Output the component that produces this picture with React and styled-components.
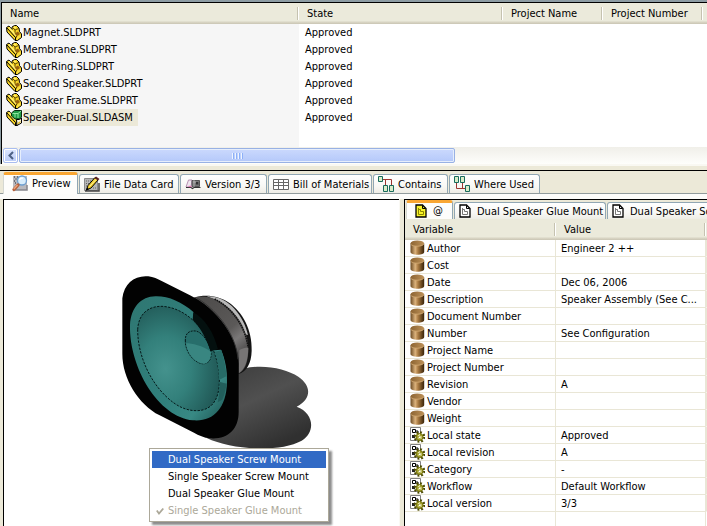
import React, { useState } from 'react';
import styled, { createGlobalStyle, css } from 'styled-components';

const GlobalStyle = createGlobalStyle`
  * { box-sizing: border-box; }
  body {
    margin: 0;
    overflow: hidden;
    background: #ece9d8;
    color: #000;
    font: 11px/13px "DejaVu Sans Condensed", "DejaVu Sans", sans-serif;
  }
  button { font: inherit; color: inherit; }
`;

const Page = styled.div`
  display: flex;
  flex-direction: column;
  height: 100vh;
`;

/* ---------- file list ---------- */

const FilePane = styled.section`
  flex: none;
  padding: 2px 0 0 1px;
  background: #8d9ca3;
`;

const FileList = styled.div`
  border: solid #000;
  border-width: 1px 0 0 1px;
  background: linear-gradient(to right, #f6f6f6 297px, #fff 297px);
`;

const ListBody = styled.div`
  height: 144px;
`;

const Table = styled.table`
  width: 100%;
  table-layout: fixed;
  border-collapse: separate;
  border-spacing: 0;
`;

const Th = styled.th`
  width: ${(p) => (p.$width ? `${p.$width}px` : 'auto')};
  height: 21px;
  padding: 0 8px;
  text-align: left;
  font-weight: normal;
  white-space: nowrap;
  background:
    ${(p) => (p.$width ? 'linear-gradient(to right, #c5c2b0 1px, #fff 1px) right center / 2px 13px no-repeat,' : '')}
    linear-gradient(#ebeadb 84%, #d8d4c3 92%, #c9c5b3);
`;

const FileCell = styled.td`
  height: 17px;
  padding: 0 0 0 ${(p) => (p.$first ? 4 : 6)}px;
  white-space: nowrap;
`;

const IconLabel = styled.div`
  display: flex;
  align-items: center;
  gap: ${(p) => p.$gap || 1}px;
  height: 16px;

  svg { flex: none; }
`;

const FileName = styled.span`
  height: 17px;
  line-height: 17px;
  padding-right: 5px;
  background: ${(p) => (p.$selected ? '#ece9d8' : 'transparent')};
`;

const ScrollBar = styled.div`
  display: flex;
  gap: 1px;
  height: 17px;
  padding: 1px 0 1px 1px;
  background: linear-gradient(#f0efe9, #fefefb);
`;

const ScrollArrow = styled.button`
  display: flex;
  align-items: center;
  justify-content: center;
  width: 15px;
  padding: 0;
  border: 1px solid #a9bdf0;
  border-radius: 2px;
  background: linear-gradient(#dce6fe, #b9cbf8);
  box-shadow: inset 0 0 0 1px #fff;
`;

const ScrollThumb = styled.div`
  display: flex;
  align-items: center;
  justify-content: center;
  gap: 1px;
  width: 62%;
  border: 1px solid #98b1e4;
  border-radius: 2px;
  background: linear-gradient(#cbd9fd, #b9ccfb 80%, #b0c5f6);
  box-shadow: inset 0 0 0 1px #e6eefc;
`;

const Grip = styled.i`
  width: 1px;
  height: 6px;
  background: #eef4fe;
  border-right: 1px solid #8cb0f8;
  box-sizing: content-box;
`;

const Splitter = styled.div`
  flex: none;
  height: 6px;
  background: #ece9d8;
  border-top: 2px solid #f9f8f2;
`;

/* ---------- tabs ---------- */

const Lower = styled.section`
  flex: 1;
  min-height: 0;
  display: flex;
  flex-direction: column;
  border-top: 1px solid #000;
`;

const TabStrip = styled.div`
  flex: none;
  display: flex;
  align-items: flex-end;
  gap: 1px;
  height: 23px;
  padding-left: 3px;
  border-bottom: 1px solid #919b9c;
  background: #ece9d8;
`;

const InnerTabStrip = styled(TabStrip)`
  height: 19px;
  padding-left: 1px;
  border-bottom: 0;
  overflow: hidden;
`;

const Tab = styled.button`
  flex: none;
  display: flex;
  align-items: center;
  gap: ${(p) => (p.$inner ? 6 : 4)}px;
  width: ${(p) => p.$width}px;
  height: ${(p) => (p.$inner ? 17 : 19)}px;
  padding: 0 0 0 4px;
  border: 1px solid #91a7b4;
  border-bottom: 0;
  border-radius: 3px 3px 0 0;
  background: linear-gradient(#fff, #f8f8f5 60%, #eeede5);
  white-space: nowrap;

  svg { flex: none; }

  ${(p) =>
    p.$active &&
    css`
      height: ${p.$inner ? 19 : 22}px;
      margin-bottom: ${p.$inner ? 0 : -1}px;
      padding: 0 0 ${p.$inner ? 1 : 3}px 8px;
      border-top: 3px solid #f9a632;
      border-left-color: #d5d8d2;
      background: #fdfdfb;
    `}
`;

const Panes = styled.div`
  flex: 1;
  min-height: 0;
  display: grid;
  grid-template-columns: 4fr 3fr;
  padding-top: 5px;
  background: #fcfcfa;
`;

const PreviewFrame = styled.div`
  min-width: 0;
  padding: 0 5px 0 3px;
  background: #ece9d8;
`;

const Preview = styled.div`
  position: relative;
  height: 100%;
  padding: 65px 0 0 106px;
  border: solid #000;
  border-width: 1px 0 0 1px;
  background: #fff;
  box-shadow: 1px 0 0 #faf9f4;
`;

const Details = styled.div`
  min-width: 0;
  overflow: hidden;
  border: solid #000;
  border-width: 1px 0 0 1px;
  background: #fff;
`;

const VarCell = styled.td`
  height: 17px;
  padding: 0 0 0 5px;
  overflow: hidden;
  white-space: nowrap;
  border-bottom: 1px solid ${(p) => (p.$empty ? 'transparent' : '#e9e6d6')};
  border-right: 1px solid #e9e6d6;
`;

const DetailBody = styled.div`
  height: 100%;
  background:
    linear-gradient(#e9e6d6, #e9e6d6) 150px 0 / 1px 100% no-repeat,
    linear-gradient(#e9e6d6, #e9e6d6) 300px 0 / 1px 100% no-repeat,
    #fff;
`;

/* ---------- configuration menu ---------- */

const Menu = styled.div`
  position: absolute;
  left: 145px;
  top: 248px;
  width: 180px;
  padding: 2px;
  border: 1px solid #aca899;
  background: #fff;
  box-shadow: 3px 3px 2px rgba(0, 0, 0, 0.45);
`;

const MenuItem = styled.button`
  display: flex;
  align-items: center;
  width: 100%;
  height: 17px;
  padding: 0;
  border: 0;
  background: ${(p) => (p.$active ? '#316ac5' : 'transparent')};
  color: ${(p) => (p.$active ? '#fff' : '#000')};
  white-space: nowrap;

  &:disabled { color: #aca899; }
`;

const CheckSlot = styled.span`
  display: flex;
  justify-content: center;
  width: 16px;
`;

/* ---------- icons ---------- */

const PartIcon = () => (
  <svg width="16" height="16" viewBox="0 0 16 16">
    <path d="M.5 2.500 3 1l3 3.500V2L8.500.500h2L13 3l.5 3.500 2 2.500v3.500l-4 3H9L1 7z" fill="#f8d424" stroke="#000" />
    <path d="M1 3 9.500 12.500V15M9.500 12.500l1.500-1" fill="none" stroke="#000" />
    <path d="M7 3l2 2 3.500-1.500M9 5v3" fill="none" stroke="#3a2b00" strokeWidth=".8" />
    <path d="M3 2.500 10 10.500M8 2l2 1.300" fill="none" stroke="#fff27a" strokeWidth="1.300" />
    <path d="m8.500 8.500 3.500-2L14 9l-3 2.200z" fill="#96620f" />
    <path d="M11 12.500 14.500 10v2L11 14.500z" fill="#fbe04a" />
  </svg>
);

const AssemblyIcon = () => (
  <svg width="16" height="16" viewBox="0 0 16 16">
    <path d="M.5 2.500 3 1l4 5 4 3v6.500H9L1 7z" fill="#f8d424" stroke="#000" />
    <path d="M1 3 9.500 12.500V15" fill="none" stroke="#000" />
    <path d="M3 2.500 9.500 10" stroke="#fff27a" strokeWidth="1.300" />
    <path d="M5.500 3 8.500.500h7V7l-2 2H9L5.500 6z" fill="#1f9a45" stroke="#062c10" />
    <path d="M6.500 3.500H12V8M12 3.500l3-2.500M9 3.500v4" fill="none" stroke="#8ee7a0" />
    <path d="M10.500 9.500h3l2-1.500v5l-4.500 2.500z" fill="#f7f3df" stroke="#000" />
    <path d="M11.500 13 14.500 11v1.500l-3 2z" fill="#e8bf20" />
  </svg>
);

const DatabaseIcon = () => (
  <svg width="15" height="16" viewBox="0 0 15 16">
    <defs>
      <linearGradient id="cyl">
        <stop offset="0" stopColor="#6b4a22" />
        <stop offset=".35" stopColor="#dbb27c" />
        <stop offset=".55" stopColor="#aa7b42" />
        <stop offset="1" stopColor="#382208" />
      </linearGradient>
      <linearGradient id="cylTop">
        <stop offset="0" stopColor="#8c6432" />
        <stop offset="1" stopColor="#bd9158" />
      </linearGradient>
    </defs>
    <path d="M.500 3.500v8.500c0 1.700 3 2.700 7 2.700s6.700-1 6.700-2.700V3.500z" fill="url(#cyl)" />
    <ellipse cx="7.300" cy="3.400" rx="6.800" ry="2.900" fill="url(#cylTop)" />
    <path d="M.8 4.300c1.500 2.400 11 2.600 13 0" fill="none" stroke="#dcb47c" strokeWidth=".7" />
  </svg>
);

const GearIcon = () => (
  <svg width="15" height="16" viewBox="0 0 15 16">
    <path d="M.5.500h10v13H.500z" fill="#fff" stroke="#808080" />
    <path d="M2.500 2.500h3v3h-3zM5.500 4H8v3" fill="none" stroke="#000" />
    <path d="M2 8h3v3H2z" fill="#222" />
    <circle cx="9.500" cy="10" r="4.600" fill="none" stroke="#4b4a00" strokeWidth="2.600" strokeDasharray="1.800 1.812" />
    <circle cx="9.500" cy="10" r="3.500" fill="#a2a02e" stroke="#77750a" />
    <path d="M8 8.500h1.500V7M11 9v3M8 11h1.500" stroke="#e2e1a0" fill="none" />
    <path d="M9 9.500h1.500V11H9z" fill="#fff" />
  </svg>
);

const PreviewIcon = () => (
  <svg width="16" height="17" viewBox="0 0 16 17">
    <path d="M1 1h14v14H1z" fill="#b9b9bd" />
    <path d="M2 2h1M5 2h1M3.500 4h1M2 6h1M3 8h1" stroke="#55555f" strokeWidth="1.400" />
    <path d="M3 15h12V10" fill="none" stroke="#85858c" strokeWidth="1.500" />
    <circle cx="10" cy="5.500" r="4.500" fill="#d8edfb" stroke="#6fa0d0" strokeWidth="1.300" />
    <path d="M7.500 5c.5-1.500 2-2.200 3.500-1.700" stroke="#fff" strokeWidth="1.300" fill="none" />
    <path d="M6 10 2 14.500" stroke="#b5603c" strokeWidth="3.200" strokeLinecap="round" />
    <path d="M5.500 10 1.800 14" stroke="#f0a67c" strokeWidth="1.300" />
  </svg>
);

const CardIcon = () => (
  <svg width="16" height="16" viewBox="0 0 16 16">
    <path d="M.5 2.500h13v12H.500z" fill="#b6b6b6" stroke="#8a8a8a" />
    <path d="M2 5h5M2 7.500h3M2 10h2M9 12h4" stroke="#666" strokeDasharray="1 1" />
    <path d="M1 15h14V7" fill="none" stroke="#444" strokeWidth="1.500" />
    <path d="m4 9.500 7-8L14 4 7 12l-4.500 2z" fill="#f2cf2d" stroke="#000" />
    <path d="M5.500 10.500 12.500 3" stroke="#fff3a1" />
    <path d="M10.500 2 14 4.500 15.500 3 12 .500z" fill="#5b2020" />
    <path d="m2 14.500 1-3 2 1.500z" fill="#000" />
  </svg>
);

const VersionIcon = () => (
  <svg width="16" height="12" viewBox="0 0 16 12">
    <path d="M3.500 2 1 9h5l1-7z" fill="#efe6ee" stroke="#a87ba4" strokeWidth=".8" />
    <path d="M7 2.500h7.500v6H7z" fill="#777" stroke="#555" />
    <path d="M9 2v7M8 4h3M12 5h2" stroke="#bbb" strokeWidth=".8" />
    <path d="M1 9.500h5l1.500 1 1.500-1h6.500" fill="none" stroke="#333" strokeWidth="1.200" />
    <path d="M3.500 8.500h3" stroke="#e178b4" strokeWidth="1.300" />
    <path d="M11 4h2.500v2.500H11z" fill="#333" />
  </svg>
);

const GridIcon = () => (
  <svg width="16" height="11" viewBox="0 0 16 11">
    <path d="M.5.500h15v10H.500zM.5 3.500h15M.5 6.500h15M5.500.500v10M10.500.500v10" fill="#fff" stroke="#666" />
  </svg>
);

const ContainsIcon = () => (
  <svg width="16" height="16" viewBox="0 0 16 16">
    <path d="M4 3.500h9.500V10M7.500 3.500V10" fill="none" stroke="#9c3530" />
    <path d="M.5.500h4v5h-4zM5.500 9.500h4v6h-4zM11.500 9.500h4v6h-4z" fill="#d9ecc8" stroke="#176b5c" />
  </svg>
);

const WhereUsedIcon = () => (
  <svg width="16" height="16" viewBox="0 0 16 16">
    <path d="M2.500 5v7.500H12M8.500 5v7.500" fill="none" stroke="#9c3530" />
    <path d="M.5.500h4v6h-4zM6.500.500h4v6h-4zM11.500 9.500h4v6h-4z" fill="#d9ecc8" stroke="#176b5c" />
  </svg>
);

const DocIcon = ({ fill = '#fff' }) => (
  <svg width="12" height="14" viewBox="0 0 12 14">
    <path d="M1 1h6.500L11 4.500V13H1z" fill={fill} stroke="#000" strokeWidth="1.300" />
    <path d="M3.500 10.500V4M3.500 10.500h5v-3h-3v-2h-2" fill="none" stroke={fill === '#fff' ? '#777' : '#8b8700'} />
    <path d="M7.500 1.500v3h3" fill="none" stroke="#000" />
  </svg>
);

const LeftArrow = () => (
  <svg width="6" height="9" viewBox="0 0 6 9">
    <path d="M5 1 1.500 4.500 5 8" fill="none" stroke="#4d6185" strokeWidth="2" />
  </svg>
);

const Check = () => (
  <svg width="8" height="8" viewBox="0 0 8 8">
    <path d="m.8 3.500 2.200 3L7.300 1.500" fill="none" stroke="#aca899" strokeWidth="1.800" />
  </svg>
);

const Speaker = () => (
  <svg width="220" height="186" viewBox="0 0 660 558">
    <defs>
      <linearGradient id="shadow" x1="0" y1="0" x2=".6" y2="1">
        <stop offset="0" stopColor="#3a3a3a" />
        <stop offset=".5" stopColor="#505050" />
        <stop offset="1" stopColor="#303030" />
      </linearGradient>
      <linearGradient id="can" x1="0" y1="0" x2=".6" y2="1">
        <stop offset="0" stopColor="#4c4a49" />
        <stop offset=".6" stopColor="#5b5958" />
        <stop offset=".75" stopColor="#7a7878" />
        <stop offset="1" stopColor="#3e3d3d" />
      </linearGradient>
      <linearGradient id="rim" x1="0" y1="0" x2="1" y2="1">
        <stop offset="0" stopColor="#2f7772" />
        <stop offset=".6" stopColor="#30807c" />
        <stop offset=".8" stopColor="#388984" />
        <stop offset="1" stopColor="#1c5350" />
      </linearGradient>
      <radialGradient id="cone" cx=".34" cy=".6" r=".7">
        <stop offset="0" stopColor="#44928d" />
        <stop offset=".45" stopColor="#33807b" />
        <stop offset="1" stopColor="#1f5553" />
      </radialGradient>
    </defs>
    <path d="M370 322C430 292 520 305 565 335c42 29 38 68-5 90 54 20 56 78 15 102-65 36-210 28-285-8z" fill="url(#shadow)" />
    <path d="M252 98c38-12 76-3 103 14 43 28 72 84 70 145-1 38-15 63-40 70l-20-25z" fill="#141414" />
    <path d="M290 94c65-3 112 60 124 116l-14-4c-18-52-60-94-110-112z" fill="#b9b9b9" />
    <path d="M252 98c24-6 43-4 62 4 55 24 101 84 101 150 0 39-9 66-30 74C385 240 330 150 252 98z" fill="url(#can)" />
    <path d="M314 102c52 27 92 80 101 148" fill="none" stroke="#111" strokeWidth="5" strokeDasharray="5 2" />
    <path d="M388 255c10-5 20-8 27-7-1 38-9 64-29 77z" fill="#777575" />
    <path d="M37 100C42 55 75 30 115 34c15 2 28 8 40 14l85 43c82 40 146 130 146 205v145c0 53-34 83-86 79-18-2-34-9-48-17l-103-52C85 418 37 340 37 266z" fill="#020202" />
    <path d="M262 100c68 41 117 116 122 183" fill="none" stroke="#333" strokeWidth="3" />
    <path d="M60 180c3-54 35-88 80-86 37 0 76 17 111 48l-1 20c19 14 43 45 56 77l8 17 19-2c13 29 19 62 18 98-2 81-43 119-102 114C145 457 57 307 60 180z" fill="url(#rim)" />
    <path d="M83 194c2-43 28-71 73-70 60 3 111 48 143 107 20 38 30 82 29 120-1 54-23 84-65 86-34 1-64-13-95-43C119 347 83 270 83 194z" fill="url(#cone)" stroke="#041818" strokeWidth="3" strokeDasharray="7 4" />
    <path d="M226 228c-1-22 10-32 31-30 20 3 48 42 46 74-2 23-20 30-39 20-22-11-38-38-38-64z" fill="#276e6b" stroke="#041818" strokeWidth="3" strokeDasharray="6 3" />
    <path d="M228 235c18 0 50 7 75 25l-1 15c-6 23-23 27-42 14-18-12-30-32-32-54z" fill="#398681" />
    <path d="M250 142c36 20 62 62 74 111l-22 6c-12-36-28-68-54-95z" fill="#04100f" />
    <path d="M314 260c12-1 18-5 20-5 8 25 15 57 15 79l-22 11c0-29-4-58-13-85z" fill="#276b67" />
    <path d="M328 350l22 6c-3 18-7 35-13 48l-14 8c4-20 6-41 5-62z" fill="#225e5b" />
  </svg>
);

/* ---------- data ---------- */

const files = [
  'Magnet.SLDPRT',
  'Membrane.SLDPRT',
  'OuterRing.SLDPRT',
  'Second Speaker.SLDPRT',
  'Speaker Frame.SLDPRT',
  'Speaker-Dual.SLDASM',
];

const tabs = [
  { label: 'Preview', width: 75, icon: <PreviewIcon /> },
  { label: 'File Data Card', width: 100, icon: <CardIcon /> },
  { label: 'Version 3/3', width: 87, icon: <VersionIcon /> },
  { label: 'Bill of Materials', width: 104, icon: <GridIcon /> },
  { label: 'Contains', width: 75, icon: <ContainsIcon /> },
  { label: 'Where Used', width: 91, icon: <WhereUsedIcon /> },
];

const configs = [
  { label: '@', width: 47 },
  { label: 'Dual Speaker Glue Mount', width: 152 },
  { label: 'Dual Speaker Screw Mount', width: 160 },
];

const variables = [
  ['Author', 'Engineer 2 ++'],
  ['Cost', ''],
  ['Date', 'Dec 06, 2006'],
  ['Description', 'Speaker Assembly (See C...'],
  ['Document Number', ''],
  ['Number', 'See Configuration'],
  ['Project Name', ''],
  ['Project Number', ''],
  ['Revision', 'A'],
  ['Vendor', ''],
  ['Weight', ''],
  ['Local state', 'Approved', true],
  ['Local revision', 'A', true],
  ['Category', '-', true],
  ['Workflow', 'Default Workflow', true],
  ['Local version', '3/3', true],
];

const App = () => {
  const [tab, setTab] = useState(0);
  const [config, setConfig] = useState(0);
  const [selected, setSelected] = useState(5);

  return (
    <Page>
      <GlobalStyle />
      <FilePane>
        <FileList>
          <ListBody>
            <Table>
              <thead>
                <tr>
                  <Th $width={297}>Name</Th>
                  <Th $width={204}>State</Th>
                  <Th $width={100}>Project Name</Th>
                  <Th $width={100}>Project Number</Th>
                  <Th />
                </tr>
              </thead>
              <tbody>
                {files.map((name, i) => (
                  <tr key={name} onClick={() => setSelected(i)}>
                    <FileCell $first>
                      <IconLabel>
                        {name.endsWith('ASM') ? <AssemblyIcon /> : <PartIcon />}
                        <FileName $selected={i === selected}>{name}</FileName>
                      </IconLabel>
                    </FileCell>
                    <FileCell>Approved</FileCell>
                    <FileCell />
                    <FileCell />
                    <FileCell />
                  </tr>
                ))}
              </tbody>
            </Table>
          </ListBody>
          <ScrollBar>
            <ScrollArrow aria-label="Scroll left"><LeftArrow /></ScrollArrow>
            <ScrollThumb>
              <Grip /><Grip /><Grip /><Grip />
            </ScrollThumb>
          </ScrollBar>
        </FileList>
      </FilePane>
      <Splitter />

      <Lower>
        <TabStrip role="tablist">
          {tabs.map((t, i) => (
            <Tab key={t.label} role="tab" $width={t.width} $active={i === tab} onClick={() => setTab(i)}>
              {t.icon}
              {t.label}
            </Tab>
          ))}
        </TabStrip>
        <Panes>
          <PreviewFrame>
            <Preview>
              <Speaker />
              <Menu role="menu">
                <MenuItem role="menuitem" $active><CheckSlot />Dual Speaker Screw Mount</MenuItem>
                <MenuItem role="menuitem"><CheckSlot />Single Speaker Screw Mount</MenuItem>
                <MenuItem role="menuitem"><CheckSlot />Dual Speaker Glue Mount</MenuItem>
                <MenuItem role="menuitem" disabled><CheckSlot><Check /></CheckSlot>Single Speaker Glue Mount</MenuItem>
              </Menu>
            </Preview>
          </PreviewFrame>
          <Details>
            <InnerTabStrip role="tablist">
              {configs.map((c, i) => (
                <Tab key={c.label} role="tab" $inner $width={c.width} $active={i === config} onClick={() => setConfig(i)}>
                  <DocIcon fill={i === 0 ? '#f8f32a' : '#fff'} />
                  {c.label}
                </Tab>
              ))}
            </InnerTabStrip>
            <DetailBody>
              <Table>
                <thead>
                  <tr>
                    <Th $width={151}>Variable</Th>
                    <Th $width={150}>Value</Th>
                    <Th />
                  </tr>
                </thead>
                <tbody>
                  {variables.map(([name, value, local]) => (
                    <tr key={name}>
                      <VarCell>
                        <IconLabel $gap={2}>
                          {local ? <GearIcon /> : <DatabaseIcon />}
                          {name}
                        </IconLabel>
                      </VarCell>
                      <VarCell>{value}</VarCell>
                      <VarCell $empty />
                    </tr>
                  ))}
                </tbody>
              </Table>
            </DetailBody>
          </Details>
        </Panes>
      </Lower>
    </Page>
  );
};

export default App;
